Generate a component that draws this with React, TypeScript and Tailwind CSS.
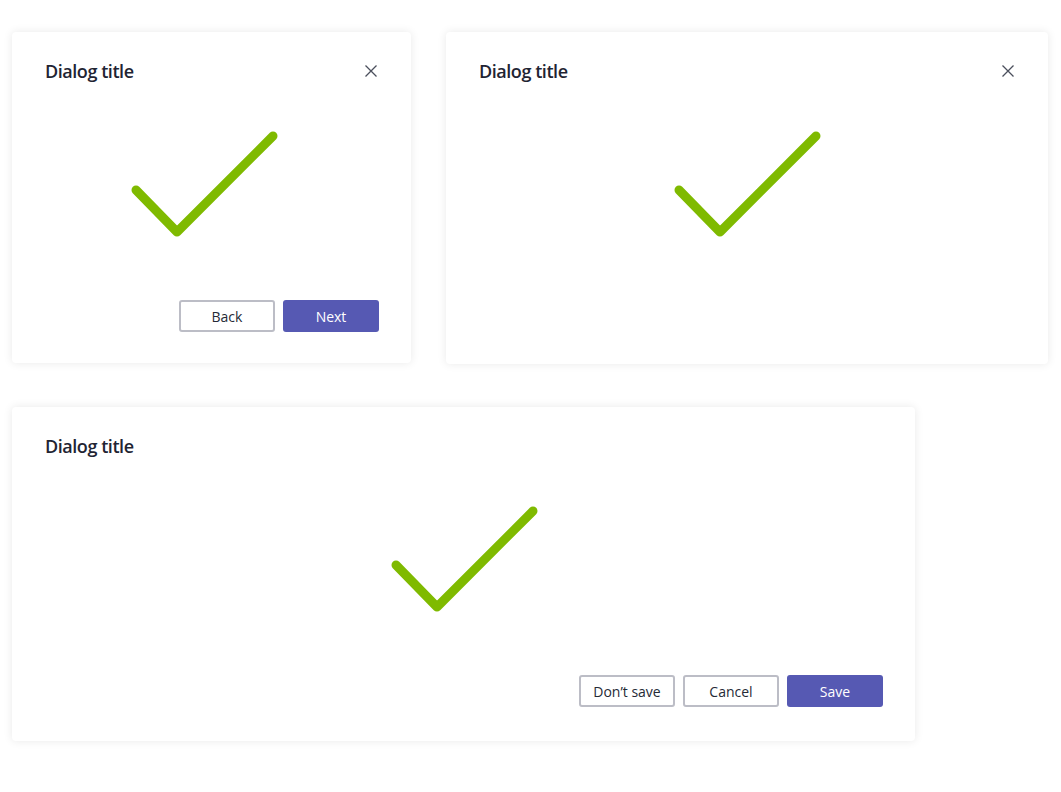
import React from "react";

const font = { fontFamily: '"Open Sans", "Noto Sans", sans-serif' };

function Check() {
  return (
    <svg width="147" height="106" viewBox="0 0 147 106" fill="none">
      <polyline
        points="5,59 46,101 142,5"
        stroke="#7fba00"
        strokeWidth="9"
        strokeLinecap="round"
        strokeLinejoin="round"
      />
    </svg>
  );
}

function CloseIcon() {
  return (
    <svg width="12" height="12" viewBox="0 0 12 12" fill="none">
      <path d="M0.5 0.5 L11.5 11.5 M11.5 0.5 L0.5 11.5" stroke="#4b4f5c" strokeWidth="1.3" />
    </svg>
  );
}

function Btn({ label, primary }: { label: string; primary?: boolean }) {
  return primary ? (
    <button className="w-[96px] h-[32px] rounded-[3px] bg-[#5659b3] text-white text-[14px]">{label}</button>
  ) : (
    <button className="w-[96px] h-[32px] rounded-[3px] border-2 border-[#bcbdc6] bg-white text-[#252a36] text-[14px]">
      {label}
    </button>
  );
}

function Card({
  width,
  height,
  close,
  buttons,
  checkShift,
}: {
  width: string;
  height: string;
  close?: boolean;
  buttons?: { label: string; primary?: boolean }[];
  checkShift?: string;
}) {
  return (
    <div
      className={`${width} ${height} flex flex-col bg-white rounded-[4px] shadow-[0_0_10px_rgba(0,0,0,0.09)] pl-[33px] pr-[32px] pt-[27px]`}
    >
      <div className="flex items-center justify-between h-[24px]">
        <div className="text-[18px] font-semibold text-[#1f2433] leading-[24px] tracking-[-0.45px]">Dialog title</div>
        {close && (
          <div className="mr-[2px]">
            <CloseIcon />
          </div>
        )}
      </div>
      <div className={`flex justify-center mt-[48px] ${checkShift ?? ""}`}>
        <Check />
      </div>
      {buttons && (
        <div className="flex justify-end gap-[8px] mt-[63px]">
          {buttons.map((b) => (
            <Btn key={b.label} label={b.label} primary={b.primary} />
          ))}
        </div>
      )}
    </div>
  );
}

export default function App() {
  return (
    <div className="w-[1061px] h-[792px] bg-white pl-[12px] pt-[32px] flex flex-col gap-[43px]" style={font}>
      <div className="flex gap-[35px]">
        <Card
          width="w-[399px]"
          height="h-[331px]"
          close
          checkShift="pr-[16px]"
          buttons={[{ label: "Back" }, { label: "Next", primary: true }]}
        />
        <Card width="w-[602px]" height="h-[332px]" close />
      </div>
      <Card
        width="w-[903px]"
        height="h-[334px]"
        buttons={[{ label: "Don’t save" }, { label: "Cancel" }, { label: "Save", primary: true }]}
      />
    </div>
  );
}
